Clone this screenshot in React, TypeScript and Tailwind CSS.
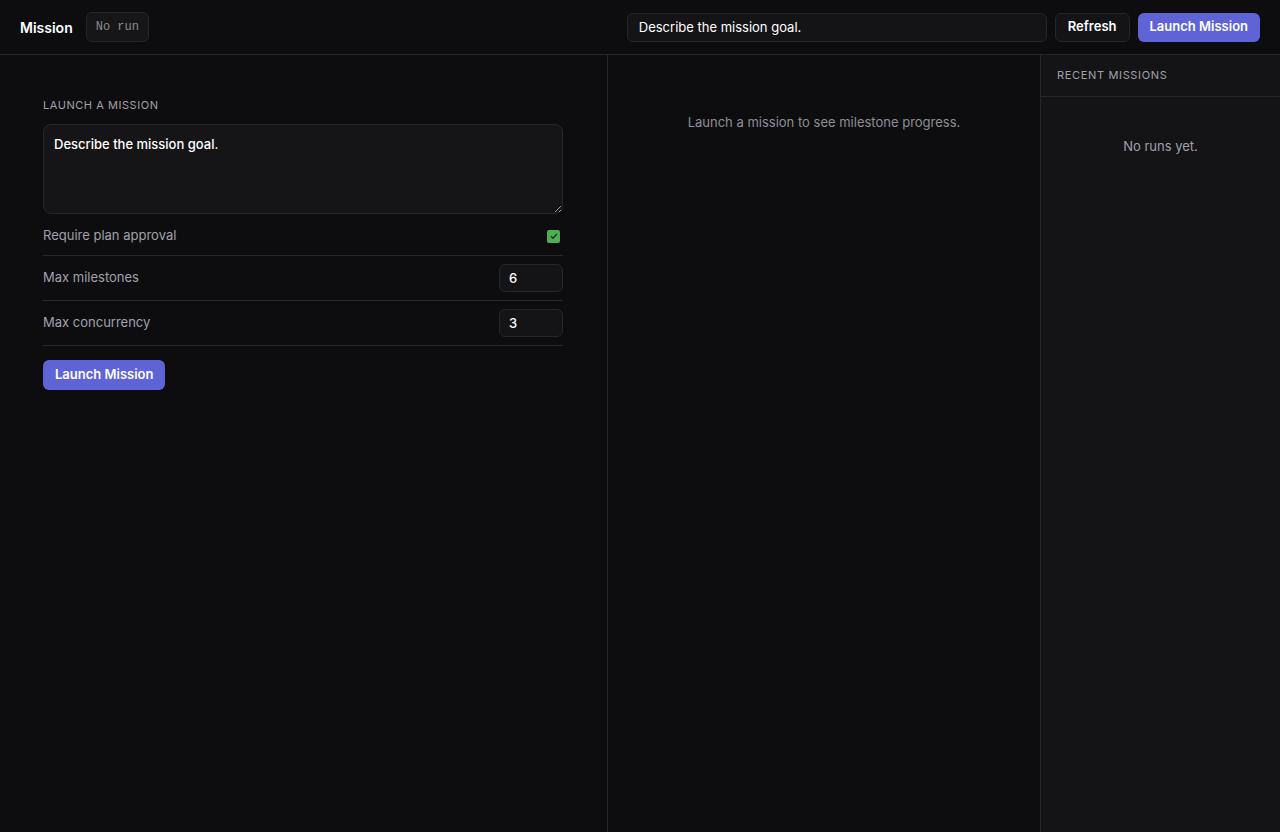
import { useState } from 'react';

const font = { fontFamily: 'Inter, "Noto Sans", sans-serif' };

function SettingRow({ label, children }: { label: string; children: React.ReactNode }) {
  return (
    <div className="flex h-[45px] items-center justify-between border-b border-[#27272a]">
      <span className="text-[13px] text-[#a1a1aa]">{label}</span>
      {children}
    </div>
  );
}

export default function App() {
  const [goal, setGoal] = useState('Describe the mission goal.');
  const [approval, setApproval] = useState(true);
  const [milestones, setMilestones] = useState('6');
  const [concurrency, setConcurrency] = useState('3');

  return (
    <div className="flex h-[832px] flex-col bg-[#0d0d10] text-white" style={font}>
      {/* top bar */}
      <header className="flex h-[55px] shrink-0 items-center border-b border-[#27272a] px-5">
        <span className="text-[14px] font-semibold">Mission</span>
        <span
          className="ml-[13px] rounded-md border border-[#27272a] bg-[#161619] px-[9px] py-[5px] text-[12px] text-[#8a8a92]"
          style={{ fontFamily: '"Liberation Mono", monospace' }}
        >
          No run
        </span>
        <div className="ml-auto flex items-center gap-2">
          <input
            value={goal}
            onChange={(e) => setGoal(e.target.value)}
            className="h-[29px] w-[420px] rounded-md border border-[#27272a] bg-[#141417] px-[11px] text-[13px] text-white outline-none"
          />
          <button className="h-[29px] rounded-md border border-[#27272a] bg-[#141417] px-3 text-[13px] font-semibold">
            Refresh
          </button>
          <button className="h-[29px] rounded-md bg-[#5e63d6] px-3 text-[13px] font-semibold">
            Launch Mission
          </button>
        </div>
      </header>

      <div className="flex min-h-0 flex-1">
        {/* launch form */}
        <section className="w-[608px] shrink-0 border-r border-[#27272a] pl-[43px] pr-[44px] pt-[42px]">
          <h2 className="text-[11px] uppercase tracking-[0.05em] text-[#a1a1aa]">Launch a mission</h2>
          <textarea
            value={goal}
            onChange={(e) => setGoal(e.target.value)}
            className="mt-[10px] block h-[90px] w-full rounded-lg border border-[#27272a] bg-[#151518] px-[10px] py-[10px] text-[13px] font-medium text-white outline-none"
          />
          <div className="mt-[4px] flex h-[38px] items-center justify-between border-b border-[#27272a]">
            <span className="text-[13px] text-[#a1a1aa]">Require plan approval</span>
            <button
              onClick={() => setApproval(!approval)}
              className="mr-[3px] flex h-[13px] w-[13px] items-center justify-center rounded-[2px] bg-[#4caf50]"
            >
              {approval && (
                <svg viewBox="0 0 12 12" className="h-[10px] w-[10px]">
                  <path d="M2.5 6.3l2.3 2.3 4.7-5" fill="none" stroke="#1c3a1e" strokeWidth="1.8" />
                </svg>
              )}
            </button>
          </div>
          <SettingRow label="Max milestones">
            <input
              value={milestones}
              onChange={(e) => setMilestones(e.target.value)}
              className="h-[28px] w-[64px] rounded-md border border-[#27272a] bg-[#141417] px-[9px] text-[13px] font-medium text-white outline-none"
            />
          </SettingRow>
          <SettingRow label="Max concurrency">
            <input
              value={concurrency}
              onChange={(e) => setConcurrency(e.target.value)}
              className="h-[28px] w-[64px] rounded-md border border-[#27272a] bg-[#141417] px-[9px] text-[13px] font-medium text-white outline-none"
            />
          </SettingRow>
          <button className="mt-[14px] h-[30px] rounded-md bg-[#5e63d6] px-3 text-[13px] font-semibold">
            Launch Mission
          </button>
        </section>

        {/* progress */}
        <section className="flex-1 pt-[58px] text-center">
          <p className="text-[13px] text-[#8e8e96]">Launch a mission to see milestone progress.</p>
        </section>

        {/* recent */}
        <aside className="w-[240px] shrink-0 border-l border-[#27272a] bg-[#141417]">
          <div className="flex h-[42px] items-center border-b border-[#27272a] px-4">
            <h3 className="text-[11px] uppercase tracking-[0.06em] text-[#a1a1aa]">Recent missions</h3>
          </div>
          <p className="pt-[40px] text-center text-[13px] text-[#a1a1aa]">No runs yet.</p>
        </aside>
      </div>
    </div>
  );
}
